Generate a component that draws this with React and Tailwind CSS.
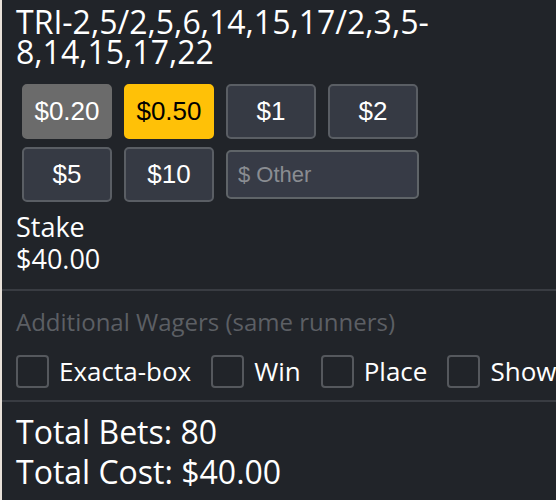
import React from 'react';

const AMOUNTS_ROW1 = [
  { label: '$0.20', tone: 'gray' },
  { label: '$0.50', tone: 'yellow' },
  { label: '$1', tone: 'dark' },
  { label: '$2', tone: 'dark' },
];

const AMOUNTS_ROW2 = [
  { label: '$5', tone: 'dark' },
  { label: '$10', tone: 'dark' },
];

const EXTRA = ['Exacta-box', 'Win', 'Place', 'Show'];

const toneClass = {
  gray: 'bg-[#6b6b6b] border-[#6b6b6b] text-white',
  yellow: 'bg-[#ffc107] border-[#ffc107] text-black',
  dark: 'bg-[#363a44] border-[#5a5e64] text-white',
};

const AmountButton = ({ label, tone }) => (
  <button
    className={`w-[90px] h-[55px] rounded-[5px] border-2 text-[26px] font-['Liberation_Sans',Arial,sans-serif] ${toneClass[tone]}`}
  >
    {label}
  </button>
);

const App = () => {
  return (
    <div className="flex min-h-[500px] bg-[#212429] font-['Open_Sans',sans-serif] text-white overflow-hidden">
      <div className="w-[2px] shrink-0 bg-[#e8e1d9]" />
      <div className="flex-1 min-w-0">
        {/* Wager */}
        <div className="px-[14px] pt-[7px] pb-[14px]">
          <h1 className="text-[32px] leading-[30px] font-normal">
            TRI-2,5/2,5,6,14,15,17/2,3,5-
            <br />
            8,14,15,17,22
          </h1>

          <div className="mt-[17px] ml-[6px] flex flex-col gap-[8px]">
            <div className="flex gap-[12px]">
              {AMOUNTS_ROW1.map((a) => (
                <AmountButton key={a.label} {...a} />
              ))}
            </div>
            <div className="flex items-center gap-[12px]">
              {AMOUNTS_ROW2.map((a) => (
                <AmountButton key={a.label} {...a} />
              ))}
              <input
                placeholder="$ Other"
                className="w-[193px] h-[49px] rounded-[5px] border-2 border-[#5f6468] bg-[#373b46] px-[10px] text-[22px] font-['Liberation_Sans',Arial,sans-serif] placeholder:text-[#8a8d92] outline-none"
              />
            </div>
          </div>

          <div className="mt-[9px] text-[27px] leading-[32px]">
            <div>Stake</div>
            <div>$40.00</div>
          </div>
        </div>

        {/* Additional wagers */}
        <div className="border-t-2 border-[#393c42] px-[14px] pt-[16px] pb-[9px]">
          <div className="text-[24px] leading-[30px] text-[#5c5f64]">Additional Wagers (same runners)</div>
          <div className="mt-[15px] flex items-center whitespace-nowrap">
            {EXTRA.map((name) => (
              <label key={name} className="flex items-center mr-[20px] shrink-0">
                <span className="w-[33px] h-[33px] rounded-[4px] border-2 border-[#55585d]" />
                <span className="ml-[10px] text-[26px]">{name}</span>
              </label>
            ))}
          </div>
        </div>

        {/* Totals */}
        <div className="border-t-2 border-[#393c42] px-[14px] pt-[10px] text-[32px] leading-[40px]">
          <div>Total Bets: 80</div>
          <div>Total Cost: $40.00</div>
        </div>
      </div>
    </div>
  );
};

export default App;
